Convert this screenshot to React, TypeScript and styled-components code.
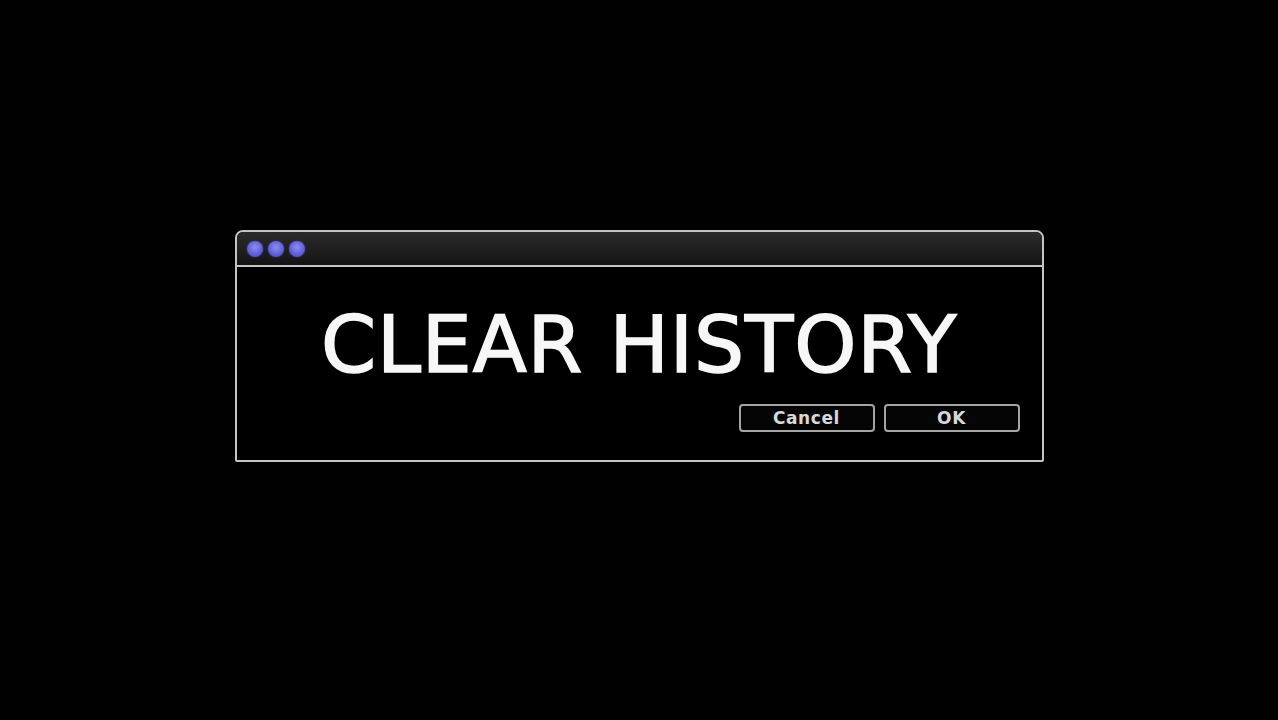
import styled, { createGlobalStyle } from "styled-components";

const GlobalStyle = createGlobalStyle`
    html, body {
        margin: 0;
        padding: 0;
        background: #000;
    }
    body {
        height: 720px;
        overflow: hidden;
        font-family: "DejaVu Sans", Verdana, sans-serif;
    }
`;

const Screen = styled.div`
    height: 720px;
    padding-top: 230px;
    box-sizing: border-box;
    background: #010101;
`;

const Window = styled.div`
    width: 809px;
    margin: 0 auto;
    box-sizing: border-box;
    border: 2px solid #c4c4c4;
    border-radius: 8px 8px 2px 2px;
    background: #000;
    overflow: hidden;
`;

const TitleBar = styled.div`
    height: 33px;
    display: flex;
    align-items: center;
    gap: 5px;
    padding-left: 10px;
    border-bottom: 2px solid #c4c4c4;
    background: linear-gradient(#2b2b2b, #141414);
`;

const Dot = styled.span`
    width: 16px;
    height: 16px;
    border-radius: 50%;
    background: radial-gradient(circle at 50% 40%, #8c8cf5, #5656d0 70%, #3a3aa0);
    box-shadow: 0 0 2px rgba(90, 90, 220, 0.7);
`;

const Body = styled.div`
    padding: 37px 22px 28px;
    display: flex;
    flex-direction: column;
`;

const Heading = styled.h1`
    margin: 0;
    font-size: 79px;
    line-height: 82px;
    font-weight: 400;
    letter-spacing: 0.9px;
    text-align: center;
    color: #f7f7f7;
    -webkit-text-stroke: 1.6px #f7f7f7;
`;

const Buttons = styled.div`
    margin-top: 18px;
    display: flex;
    justify-content: flex-end;
    gap: 9px;
`;

const Button = styled.button`
    width: 136px;
    height: 28px;
    box-sizing: border-box;
    border: 2px solid #a4a4a4;
    border-radius: 4px;
    background: #050505;
    color: #d8d8d8;
    font-family: "DejaVu Sans", Verdana, sans-serif;
    font-weight: 700;
    font-size: 17px;
    letter-spacing: 0.6px;
    padding: 0;
    cursor: pointer;
`;

export default function App() {
    return (
        <>
            <GlobalStyle />
            <Screen>
                <Window>
                    <TitleBar>
                        <Dot />
                        <Dot />
                        <Dot />
                    </TitleBar>
                    <Body>
                        <Heading>CLEAR HISTORY</Heading>
                        <Buttons>
                            <Button>Cancel</Button>
                            <Button>OK</Button>
                        </Buttons>
                    </Body>
                </Window>
            </Screen>
        </>
    );
}
